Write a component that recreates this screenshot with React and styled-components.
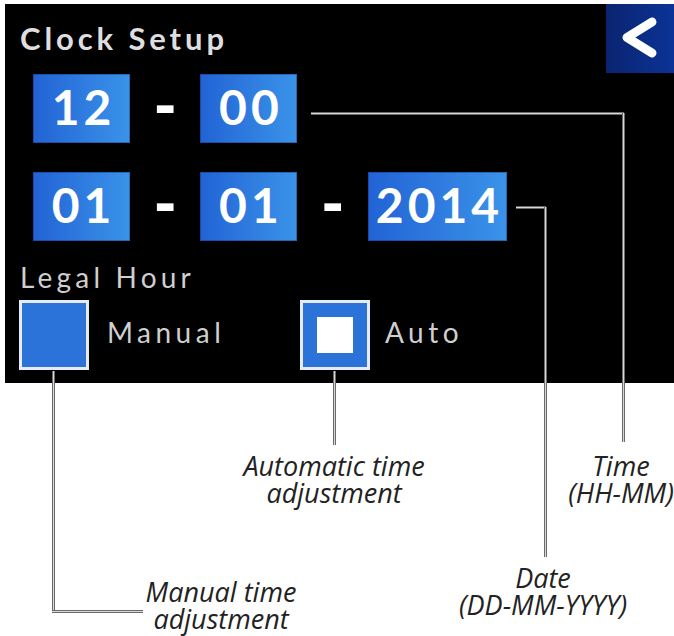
import React from "react";
import styled, { createGlobalStyle } from "styled-components";

const GlobalStyle = createGlobalStyle`
  html, body { margin: 0; padding: 0; background: #fff; }
  * { box-sizing: border-box; }
`;

const Page = styled.div`
  position: relative;
  width: 674px;
  height: 636px;
  padding: 4px 0 0 5px;
  overflow: hidden;
  background: #fff;
`;

const Panel = styled.div`
  width: 669px;
  height: 379px;
  background: #000;
  display: flex;
  flex-direction: column;
  font-family: Lato, "DejaVu Sans", sans-serif;
`;

const Header = styled.div`
  height: 70px;
  display: flex;
  justify-content: space-between;
  align-items: flex-start;
`;

const Title = styled.h1`
  margin: 0;
  height: 69px;
  display: flex;
  align-items: center;
  padding-left: 15px;
  font-size: 31px;
  line-height: 37px;
  font-weight: 700;
  letter-spacing: 3.9px;
  color: #dedede;
`;

const BackButton = styled.button`
  width: 68px;
  height: 69px;
  border: 0;
  padding: 0;
  background: linear-gradient(90deg, #0a2470 0%, #0b3397 100%);
  display: flex;
  align-items: center;
  justify-content: center;
`;

const FieldRow = styled.div`
  display: flex;
  align-items: center;
  gap: 24px;
  padding-left: 28px;
  margin-top: ${(p) => p.$mt || 0}px;
`;

const Field = styled.div`
  height: 69px;
  min-width: 97px;
  padding: 0 4px 3px 8px;
  display: flex;
  align-items: center;
  justify-content: center;
  background: linear-gradient(90deg, #2263d5 0%, #3a93e9 100%);
  box-shadow: inset 0 0 0 1px rgba(10, 30, 90, 0.35);
  font-size: 48px;
  line-height: 58px;
  font-weight: 700;
  letter-spacing: 4px;
  color: #fff;
`;

const Separator = styled.span`
  font-family: "DejaVu Sans", sans-serif;
  font-weight: 700;
  font-size: 54px;
  line-height: 54px;
  height: 54px;
  margin-bottom: 4px;
  color: #fff;
`;

const SectionLabel = styled.div`
  margin-top: 20px;
  padding-left: 15px;
  font-size: 28px;
  line-height: 32px;
  font-weight: 400;
  letter-spacing: 4.2px;
  color: #cfcfcf;
`;

const Options = styled.div`
  margin-top: 7px;
  padding-left: 14px;
  display: grid;
  grid-template-columns: 281px auto;
`;

const Option = styled.label`
  display: flex;
  align-items: center;
  gap: ${(p) => p.$gap}px;
`;

const Box = styled.span`
  width: 70px;
  height: 70px;
  border: 3px solid #e6eaf2;
  background: #2b73d9;
  display: flex;
  align-items: center;
  justify-content: center;
`;

const Mark = styled.span`
  width: 36px;
  height: 36px;
  background: #fff;
`;

const OptionText = styled.span`
  font-size: 28px;
  line-height: 34px;
  padding-bottom: 6px;
  letter-spacing: 4.5px;
  color: #cfcfcf;
`;

const VLine = styled.div`
  position: absolute;
  left: ${(p) => p.$x - 1.5}px;
  top: ${(p) => p.$y1}px;
  width: 3px;
  height: ${(p) => p.$y2 - p.$y1}px;
  background: linear-gradient(90deg, #6a6a6a 0 33%, #d8d8d8 33% 67%, #6a6a6a 67%);
`;

const HLine = styled.div`
  position: absolute;
  top: ${(p) => p.$y - 1.5}px;
  left: ${(p) => p.$x1}px;
  height: 3px;
  width: ${(p) => p.$x2 - p.$x1}px;
  background: linear-gradient(180deg, #6a6a6a 0 33%, #d8d8d8 33% 67%, #6a6a6a 67%);
`;

const Note = styled.div`
  position: absolute;
  left: ${(p) => p.$cx}px;
  top: ${(p) => p.$top}px;
  transform: translateX(-50%);
  white-space: nowrap;
  text-align: center;
  font-family: "Open Sans", sans-serif;
  font-style: italic;
  font-size: 27px;
  line-height: 27px;
  color: #222;
`;

export default function App() {
  return (
    <>
      <GlobalStyle />
      <Page>
        <Panel>
          <Header>
            <Title>Clock Setup</Title>
            <BackButton aria-label="Back">
              <svg width="68" height="69" viewBox="0 0 68 69">
                <polyline
                  points="46,18 21,33.5 46,49"
                  fill="none"
                  stroke="#fff"
                  strokeWidth="9"
                  strokeLinecap="round"
                  strokeLinejoin="round"
                />
              </svg>
            </BackButton>
          </Header>
          <FieldRow>
            <Field>12</Field>
            <Separator>-</Separator>
            <Field>00</Field>
          </FieldRow>
          <FieldRow $mt={29}>
            <Field>01</Field>
            <Separator>-</Separator>
            <Field>01</Field>
            <Separator>-</Separator>
            <Field>2014</Field>
          </FieldRow>
          <SectionLabel>Legal Hour</SectionLabel>
          <Options>
            <Option $gap={18}>
              <Box />
              <OptionText>Manual</OptionText>
            </Option>
            <Option $gap={15}>
              <Box>
                <Mark />
              </Box>
              <OptionText>Auto</OptionText>
            </Option>
          </Options>
        </Panel>

        <HLine $y={113} $x1={311} $x2={624} />
        <VLine $x={623} $y1={113} $y2={442} />
        <HLine $y={207} $x1={516} $x2={546} />
        <VLine $x={545} $y1={207} $y2={557} />
        <VLine $x={334} $y1={371} $y2={445} />
        <VLine $x={53} $y1={371} $y2={612} />
        <HLine $y={611} $x1={52} $x2={143} />

        <Note $cx={334} $top={452}>
          Automatic time
          <br />
          adjustment
        </Note>
        <Note $cx={621} $top={452}>
          Time
          <br />
          (HH-MM)
        </Note>
        <Note $cx={543} $top={564}>
          Date
          <br />
          (DD-MM-YYYY)
        </Note>
        <Note $cx={221} $top={578}>
          Manual time
          <br />
          adjustment
        </Note>
      </Page>
    </>
  );
}
